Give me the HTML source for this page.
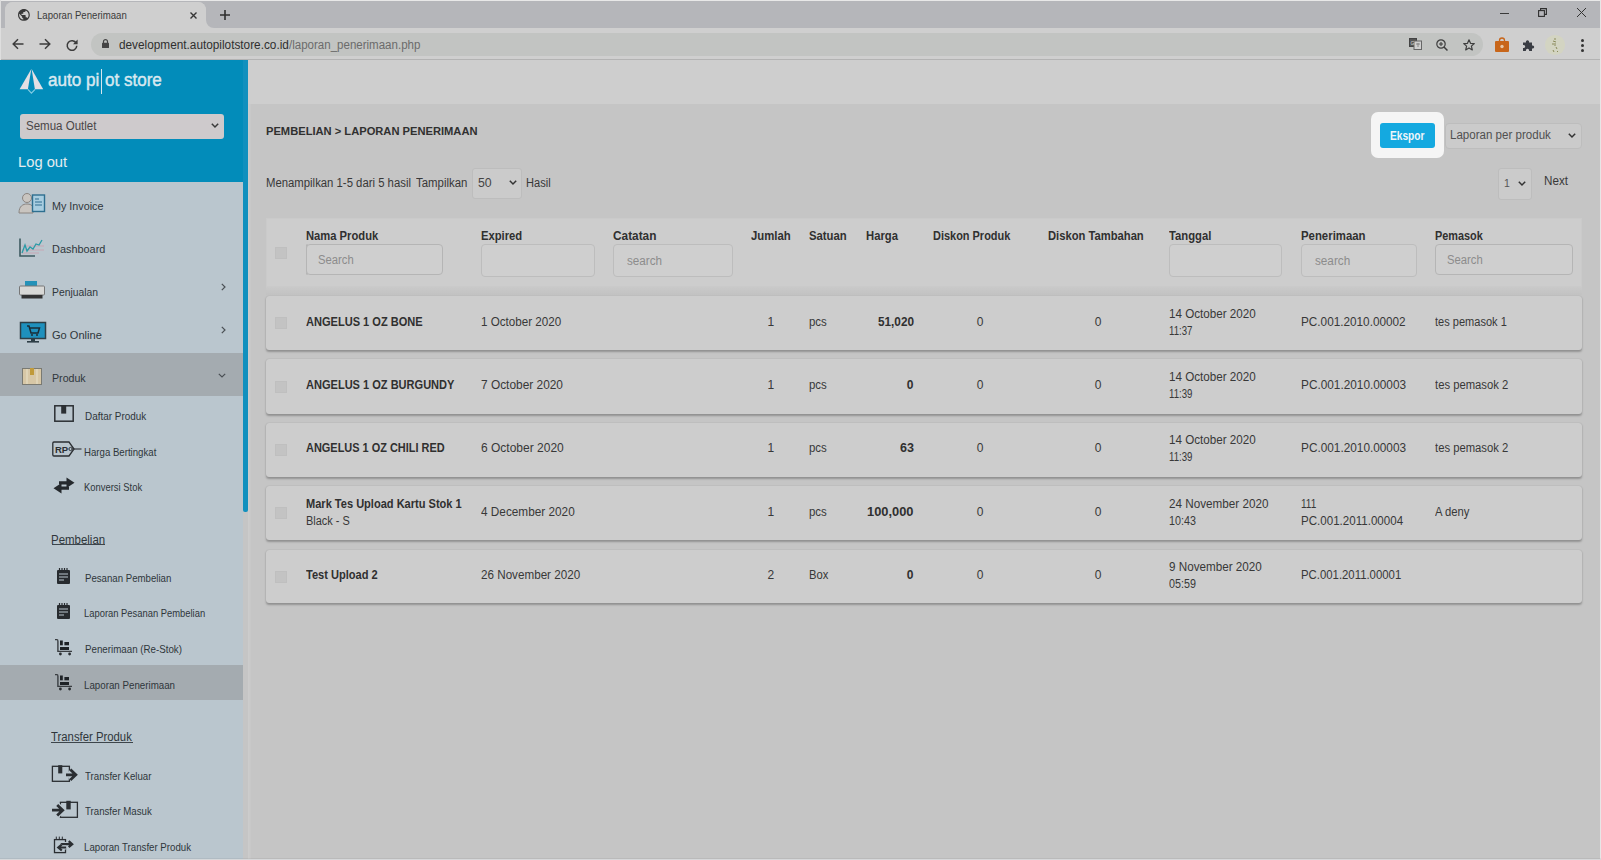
<!DOCTYPE html>
<html><head><meta charset="utf-8">
<style>
*{box-sizing:border-box;margin:0;padding:0}
html,body{width:1601px;height:860px;overflow:hidden;background:#c6c6c6;font-family:"Liberation Sans",sans-serif;color:#2b2b2b}
.a{position:absolute}
.t{position:absolute;white-space:nowrap;transform-origin:0 50%}
svg{position:absolute;overflow:visible}
.card{position:absolute;left:266px;width:1316px;background:#cdcdcd;border-radius:3px;box-shadow:0 1.5px 2px rgba(0,0,0,.25),0 0 1px rgba(0,0,0,.16)}
.inp{position:absolute;top:244px;height:33px;border:1px solid #bdbdbd;border-radius:4px;background:#cfcfcf}
.cb{position:absolute;left:275px;width:12px;height:12px;background:#c3c3c3;border:1px solid #bfbfbf}
</style></head><body>
<!-- window / tab bar -->
<div class="a" style="left:0;top:0;width:1601px;height:28px;background:#b5b6ba"></div>
<div class="a" style="left:0;top:0;width:1601px;height:1px;background:#e8e8e8"></div>
<div class="a" style="left:5px;top:2px;width:201px;height:27px;background:#cfcfcf;border-radius:8px 8px 0 0"></div>
<div class="a" style="left:198px;top:20px;width:16px;height:8px;background:#cfcfcf"></div>
<div class="a" style="left:206px;top:12px;width:16px;height:16px;border-radius:50%;background:#b5b6ba"></div>
<div class="a" style="left:206px;top:1px;width:16px;height:19px;background:#b5b6ba"></div>
<div class="a" style="left:5px;top:2px;width:201px;height:27px;background:#cfcfcf;border-radius:8px 8px 0 0"></div>
<!-- toolbar -->
<div class="a" style="left:0;top:28px;width:1601px;height:32px;background:#cfcfcf"></div>
<div class="a" style="left:0;top:59px;width:1601px;height:1px;background:#b3b3b3"></div>
<div class="a" style="left:91px;top:33px;width:1392px;height:23px;background:#c2c4c2;border-radius:12px"></div>
<div class="a" style="left:1600px;top:0;width:1px;height:860px;background:#e6e6e6"></div>
<div class="a" style="left:0;top:0;width:1px;height:860px;background:#dedede"></div>

<!-- tab icons -->
<svg style="left:17.5px;top:9px" width="11.8" height="11.8" viewBox="2 2 20 20"><path fill="#3a3a3a" d="M12 2C6.48 2 2 6.48 2 12s4.48 10 10 10 10-4.48 10-10S17.52 2 12 2zm-1 17.93c-3.95-.49-7-3.850-7-7.93 0-.62.08-1.21.21-1.79L9 15v1c0 1.1.9 2 2 2v1.93zm6.9-2.54c-.26-.81-1-1.39-1.9-1.39h-1v-3c0-.55-.45-1-1-1H8v-2h2c.55 0 1-.45 1-1V7h2c1.1 0 2-.9 2-2v-.41c2.930 1.19 5 4.06 5 7.41 0 2.08-.8 3.97-2.1 5.39z"/></svg>
<svg style="left:190px;top:11.5px" width="7" height="7" viewBox="0 0 7 7"><path d="M.5 .5L6.5 6.5M6.5 .5L.5 6.5" stroke="#363636" stroke-width="1.4"/></svg>
<svg style="left:220px;top:10px" width="10" height="10" viewBox="0 0 10 10"><path d="M5 0V10M0 5H10" stroke="#2f2f2f" stroke-width="1.6"/></svg>
<!-- window controls -->
<div class="a" style="left:1500px;top:12.5px;width:8.5px;height:1.3px;background:#3a3a3a"></div>
<svg style="left:1538px;top:8px" width="9" height="9" viewBox="0 0 9 9"><rect x=".6" y="2.6" width="5.8" height="5.8" fill="none" stroke="#2e2e2e" stroke-width="1.1"/><path d="M2.6 2.6V.6H8.4V6.4H6.4" fill="none" stroke="#2e2e2e" stroke-width="1.1"/></svg>
<svg style="left:1576.5px;top:8px" width="9" height="9" viewBox="0 0 9 9"><path d="M0 0L9 9M9 0L0 9" stroke="#333" stroke-width="1"/></svg>
<!-- nav icons -->
<svg style="left:12px;top:38px" width="12" height="12" viewBox="0 0 12 12"><path d="M11.5 6H1.5M6 1.2L1.2 6L6 10.8" fill="none" stroke="#3c3c3c" stroke-width="1.5"/></svg>
<svg style="left:39px;top:38px" width="12" height="12" viewBox="0 0 12 12"><path d="M.5 6H10.5M6 1.2L10.8 6L6 10.8" fill="none" stroke="#3c3c3c" stroke-width="1.5"/></svg>
<svg style="left:66px;top:38.5px" width="12" height="12" viewBox="0 0 12 12"><path d="M10.2 4.2A4.8 4.8 0 1 0 10.8 6.8" fill="none" stroke="#3c3c3c" stroke-width="1.5"/><path d="M11.6 .6V5.2H7Z" fill="#3c3c3c"/></svg>
<svg style="left:101.5px;top:39px" width="7" height="9" viewBox="0 0 7 9"><path d="M1.5 4V2.6A2 2 0 0 1 5.5 2.6V4" fill="none" stroke="#444" stroke-width="1.2"/><rect x="0" y="3.8" width="7" height="5.2" rx=".6" fill="#444"/></svg>
<!-- right toolbar icons -->
<svg style="left:1409px;top:38px" width="13" height="12" viewBox="0 0 13 12"><rect x=".5" y=".5" width="7" height="8" fill="#555" stroke="#444"/><rect x="5" y="3" width="7.5" height="8.5" fill="#cfcfcf" stroke="#666"/><text x="1.5" y="6.5" font-size="5" fill="#ddd" font-family="Liberation Sans">G</text><path d="M7 6H11M9 5V9" stroke="#777" stroke-width=".8"/></svg>
<svg style="left:1435.5px;top:38.5px" width="12" height="12" viewBox="0 0 12 12"><circle cx="5" cy="5" r="4.2" fill="none" stroke="#3e3e3e" stroke-width="1.2"/><path d="M8 8L11.5 11.5" stroke="#3e3e3e" stroke-width="1.5"/><path d="M5 3V7M3 5H7" stroke="#3e3e3e" stroke-width="1.1"/></svg>
<svg style="left:1462.5px;top:38.5px" width="12" height="12" viewBox="0 0 12 12"><path d="M6 .8L7.5 4.3L11.3 4.6L8.4 7.1L9.3 10.9L6 8.9L2.7 10.9L3.6 7.1L.7 4.6L4.5 4.3Z" fill="none" stroke="#3e3e3e" stroke-width="1.2" stroke-linejoin="round"/></svg>
<svg style="left:1495px;top:37.5px" width="14" height="14" viewBox="0 0 14 14"><rect x="0" y="3" width="14" height="11" rx="1" fill="#c8661a"/><path d="M4.5 3.5V2.5A2.5 2.5 0 0 1 9.5 2.5V3.5" fill="none" stroke="#c8661a" stroke-width="1.3"/><circle cx="7" cy="8.5" r="1.7" fill="#e8c8a8"/></svg>
<svg style="left:1522px;top:38.5px" width="13" height="12" viewBox="0 0 13 12"><path d="M1 3.5H4A1.6 1.6 0 1 1 7 3.5H10V6.5A1.6 1.6 0 1 1 10 9.5V12H7A1.6 1.6 0 1 0 4 12H1V9A1.6 1.6 0 1 0 1 6Z" fill="#3a3d44"/></svg>
<div class="a" style="left:1545px;top:35px;width:19.5px;height:19.5px;border-radius:50%;background:#d3d4c2"></div>
<svg style="left:1549px;top:37px" width="12" height="16" viewBox="0 0 12 16"><path d="M6 1V3M4 4L7 5M6 6V9M3 7H5M7 10L8 12M4 13L5 15M8 14L9 15" stroke="#8a8a5a" stroke-width="1"/></svg>
<div class="a" style="left:1581px;top:38.5px;width:3px;height:3px;border-radius:50%;background:#333"></div>
<div class="a" style="left:1581px;top:43.5px;width:3px;height:3px;border-radius:50%;background:#333"></div>
<div class="a" style="left:1581px;top:48.5px;width:3px;height:3px;border-radius:50%;background:#333"></div>

<!-- sidebar -->
<div class="a" style="left:0;top:60px;width:248px;height:800px;background:#bac6ce"></div>
<div class="a" style="left:0;top:60px;width:248px;height:122px;background:#028cba"></div>
<div class="a" style="left:243px;top:182px;width:5px;height:678px;background:#c5c5c5"></div>
<div class="a" style="left:243px;top:60px;width:4.5px;height:452px;background:#1190be;border-radius:0 0 2px 2px"></div>
<div class="a" style="left:0;top:353px;width:243px;height:43px;background:#a4abb0"></div>
<div class="a" style="left:0;top:665px;width:243px;height:35px;background:#a4abb0"></div>
<!-- logo -->
<svg style="left:14px;top:64px" width="36" height="36" viewBox="14 64 36 36">
 <path d="M31.3 69L19.6 89.3H27.9Z" fill="#e4e0e4"/>
 <path d="M31.6 69L43.2 89.3H34.9Z" fill="#e4e0e4"/>
 <path d="M27.9 89.3L31.4 93.2L35.1 89.3" fill="none" stroke="#86cde4" stroke-width="1.1"/>
</svg>
<div class="a" style="left:100.5px;top:69px;width:1.6px;height:25px;background:#d6e6ee"></div>

<!-- outlet select -->
<div class="a" style="left:19.5px;top:114px;width:204px;height:25px;background:#cecacc;border-radius:3px"></div>
<svg style="left:210.5px;top:123px" width="8" height="5" viewBox="0 0 8 5"><path d="M.8 .8L4 4L7.2 .8" fill="none" stroke="#3a3a3a" stroke-width="1.5"/></svg>

<!-- sidebar icons -->
<svg style="left:18px;top:192px" width="28" height="22" viewBox="0 0 28 22">
 <circle cx="9" cy="6" r="4.5" fill="#c9c5c0" stroke="#8a8480" stroke-width="1"/>
 <path d="M1 21C1 14 5 12 9 12C12 12 14 13 15 15V21Z" fill="#c9c5c0" stroke="#8a8480" stroke-width="1"/>
 <rect x="14.5" y="3" width="12" height="16.5" fill="#a8cde0" stroke="#2e6f90" stroke-width="1.4"/>
 <path d="M17 7H21M17 10H24M17 13H24" stroke="#2e6f90" stroke-width="1.2"/>
</svg>
<svg style="left:19px;top:238px" width="26" height="19" viewBox="0 0 26 19">
 <path d="M1 .5V18H16" fill="none" stroke="#3d5a60" stroke-width="1.6"/>
 <path d="M3 8H25M3 12H25M3 15H20" stroke="#c7a6b4" stroke-width="1"/>
 <path d="M3 15L6 7L8 13L11 9L14 11L17 6L20 7L23 2" fill="none" stroke="#2a9aa6" stroke-width="1.3"/>
</svg>
<svg style="left:19px;top:281px" width="26" height="18" viewBox="0 0 26 18">
 <rect x="6" y="0" width="12" height="5" fill="#2592b8"/>
 <rect x=".5" y="5" width="25" height="9" rx="1" fill="#d8d8d6" stroke="#777" stroke-width="1"/>
 <rect x="2.5" y="14" width="21" height="3.5" fill="#333"/>
</svg>
<svg style="left:19.5px;top:321.5px" width="26" height="21" viewBox="0 0 26 21">
 <rect x=".5" y=".5" width="25" height="16" fill="#1e90bd" stroke="#2e3e46" stroke-width="1.5"/>
 <path d="M7 4H9L11 11H18L19.5 6H10" fill="none" stroke="#1b2c36" stroke-width="1.5"/>
 <circle cx="12" cy="13" r="1" fill="#1b2c36"/><circle cx="17" cy="13" r="1" fill="#1b2c36"/>
 <rect x="11" y="17" width="4" height="2" fill="#2e3e46"/><rect x="7" y="19" width="12" height="1.6" fill="#2e3e46"/>
</svg>
<svg style="left:221px;top:282.5px" width="5" height="8" viewBox="0 0 5 8"><path d="M.8 .8L4 4L.8 7.2" fill="none" stroke="#4a4f54" stroke-width="1.2"/></svg>
<svg style="left:221px;top:326px" width="5" height="8" viewBox="0 0 5 8"><path d="M.8 .8L4 4L.8 7.2" fill="none" stroke="#4a4f54" stroke-width="1.2"/></svg>
<svg style="left:218px;top:372.5px" width="8" height="5" viewBox="0 0 8 5"><path d="M.8 .8L4 4L7.2 .8" fill="none" stroke="#4a4f54" stroke-width="1.2"/></svg>
<svg style="left:22px;top:368px" width="20" height="17" viewBox="0 0 20 17">
 <rect x=".5" y=".5" width="19" height="16" fill="#d7c7a6" stroke="#7a7a72" stroke-width="1"/>
 <rect x="8" y="0" width="4" height="7" fill="#c09a3a"/>
 <path d="M5 1V16M15 1V16" stroke="#e6dcc4" stroke-width="1.2"/>
</svg>
<svg style="left:54px;top:405px" width="20" height="17" viewBox="0 0 20 17">
 <rect x=".8" y=".8" width="18.4" height="15.4" fill="none" stroke="#2b2f33" stroke-width="1.5"/>
 <rect x="7.2" y="0" width="5" height="8.6" fill="#2b2f33"/>
</svg>
<svg style="left:52px;top:441px" width="30" height="16" viewBox="0 0 30 16">
 <path d="M2 1H17L22 8L17 15H2A1.3 1.3 0 0 1 .8 13.7V2.3A1.3 1.3 0 0 1 2 1Z" fill="none" stroke="#2b2f33" stroke-width="1.3"/>
 <text x="3" y="11.6" font-size="9.5" font-weight="bold" fill="#2b2f33" font-family="Liberation Sans">RP</text>
 <circle cx="18.5" cy="8" r="1.6" fill="none" stroke="#2b2f33" stroke-width="1"/>
 <path d="M20 8H29.5" stroke="#2b2f33" stroke-width="1.1"/>
</svg>
<svg style="left:52.5px;top:477px" width="22" height="17" viewBox="0 0 22 17">
 <path d="M6 4.2H13.5V.5L21.5 5.8L13.5 11V7.6H6Z" fill="#25292d"/>
 <path d="M16 9.4H8.5V6L.5 11.3L8.5 16.5V12.8H16Z" fill="#25292d"/>
</svg>
<!-- calendar/notes icons -->
<svg style="left:57px;top:568px" width="13" height="16" viewBox="0 0 13 16">
 <rect x="0" y="2" width="13" height="14" rx="1" fill="#272b2f"/>
 <path d="M2.5 0V3M5 0V3M7.5 0V3M10 0V3" stroke="#272b2f" stroke-width="1.2"/>
 <path d="M2 6H11M2 9H11M2 12H7" stroke="#b9c5cd" stroke-width="1.2"/>
</svg>
<svg style="left:57px;top:603px" width="13" height="16" viewBox="0 0 13 16">
 <rect x="0" y="2" width="13" height="14" rx="1" fill="#272b2f"/>
 <path d="M2.5 0V3M5 0V3M7.5 0V3M10 0V3" stroke="#272b2f" stroke-width="1.2"/>
 <path d="M2 6H11M2 9H11M2 12H7" stroke="#b9c5cd" stroke-width="1.2"/>
</svg>
<svg style="left:48px;top:632px" width="32" height="30" viewBox="0 0 32 30">
 <path d="M7 7.6H9Q9.9 7.6 9.9 9.2V19.4H24" fill="none" stroke="#3a3e42" stroke-width="1.4"/>
 <rect x="12" y="8.5" width="2.8" height="4.8" fill="#1e2226"/><rect x="16.4" y="10" width="4.6" height="3.3" fill="#1e2226"/><rect x="12" y="15" width="9" height="3" fill="#1e2226"/>
 <circle cx="12.4" cy="22" r="1.4" fill="#2a2e32"/><circle cx="21.6" cy="22" r="1.4" fill="#2a2e32"/>
</svg>
<svg style="left:48px;top:667px" width="32" height="30" viewBox="0 0 32 30">
 <path d="M7 7.6H9Q9.9 7.6 9.9 9.2V19.4H24" fill="none" stroke="#3a3e42" stroke-width="1.4"/>
 <rect x="12" y="8.5" width="2.8" height="4.8" fill="#1e2226"/><rect x="16.4" y="10" width="4.6" height="3.3" fill="#1e2226"/><rect x="12" y="15" width="9" height="3" fill="#1e2226"/>
 <circle cx="12.4" cy="22" r="1.4" fill="#2a2e32"/><circle cx="21.6" cy="22" r="1.4" fill="#2a2e32"/>
</svg>




<svg style="left:46px;top:760px" width="38" height="100" viewBox="46 760 38 100">
 <g fill="none" stroke="#2a2e32">
  <rect x="52.4" y="766.3" width="17" height="15" stroke-width="1.3"/>
  <path d="M65.5 774.8H75.5M70.3 769.6L75.8 774.8L70.3 780" stroke="#bac6ce" stroke-width="5.5"/>
  <path d="M66 774.8H75.5M70.3 769.6L75.8 774.8L70.3 780" stroke-width="2.8"/>
  <rect x="60.4" y="802.3" width="17" height="15" stroke-width="1.3"/>
  <path d="M52 810.2H62M57.2 805L62.7 810.2L57.2 815.4" stroke="#bac6ce" stroke-width="5.5"/>
  <path d="M52 810.2H62M57.2 805L62.7 810.2L57.2 815.4" stroke-width="2.8"/>
  <rect x="54.5" y="839.6" width="11" height="13" stroke-width="1.3"/>
  <path d="M56.3 836.6V840M59.3 836.6V840M62.3 836.6V840" stroke-width="1"/>
  <path d="M60 844.2H72M68.7 841.2L72.2 844.2L68.7 847.2" stroke="#bac6ce" stroke-width="4.5"/>
  <path d="M60 844.2H72M68.7 841.2L72.2 844.2L68.7 847.2" stroke-width="2.2"/>
  <path d="M66 847.5H58.5M61.8 844.5L58.3 847.5L61.8 850.5" stroke="#bac6ce" stroke-width="4"/>
  <path d="M66 847.5H58.5M61.8 844.5L58.3 847.5L61.8 850.5" stroke-width="2.2"/>
 </g>
 <rect x="58.2" y="765.2" width="4.1" height="8.2" fill="#2a2e32"/>
 <rect x="66.3" y="800.8" width="4.4" height="8.6" fill="#2a2e32"/>
</svg>
<!-- main -->
<div class="a" style="left:248px;top:60px;width:1352px;height:44px;background:#cecece"></div>
<div class="a" style="left:248px;top:104px;width:1352px;height:756px;background:#c5c5c5"></div>
<div class="a" style="left:248px;top:104px;width:3px;height:756px;background:linear-gradient(90deg,#cdcdcd,#c7c7c7)"></div>
<div class="a" style="left:0;top:858px;width:1601px;height:1px;background:rgba(0,0,0,.05)"></div>
<div class="a" style="left:0;top:859px;width:1601px;height:1px;background:#d6d8da"></div>
<!-- ekspor highlight -->
<div class="a" style="left:1370.5px;top:112px;width:73.5px;height:45.5px;background:#f5f5f5;border-radius:7px"></div>
<div class="a" style="left:1380px;top:122.5px;width:55px;height:25px;background:#14a9e0;border-radius:3px"></div>
<div class="a" style="left:1444.5px;top:123px;width:137px;height:25.5px;background:#cbcbcb;border:1px solid #bdbdbd;border-radius:4px"></div>
<svg style="left:1568px;top:133px" width="8" height="5" viewBox="0 0 8 5"><path d="M.8 .8L4 4L7.2 .8" fill="none" stroke="#333" stroke-width="1.5"/></svg>
<!-- show select -->
<div class="a" style="left:472px;top:167.5px;width:49.5px;height:31px;background:#cbcbcb;border:1px solid #bdbdbd;border-radius:3px"></div>
<svg style="left:508.5px;top:180px" width="8" height="5" viewBox="0 0 8 5"><path d="M.8 .8L4 4L7.2 .8" fill="none" stroke="#333" stroke-width="1.5"/></svg>
<div class="a" style="left:1497.5px;top:167.5px;width:34px;height:32px;background:#cbcbcb;border:1px solid #bdbdbd;border-radius:3px"></div>
<svg style="left:1518px;top:180.5px" width="8" height="5" viewBox="0 0 8 5"><path d="M.8 .8L4 4L7.2 .8" fill="none" stroke="#333" stroke-width="1.5"/></svg>

<!-- table -->
<div class="card" style="top:218px;height:69px;box-shadow:none;border-radius:0;border:1px solid #cacaca"></div>
<div class="a" style="left:266px;top:287px;width:1316px;height:8px;background:linear-gradient(#c9c9c9,#c2c2c2)"></div>
<div class="cb" style="top:246.5px"></div>
<div class="inp" style="left:306px;height:30.5px;border-color:#b5b5b5"></div>
<div class="inp" style="left:481px;width:114px"></div>
<div class="inp" style="left:613px;width:119.5px"></div>
<div class="inp" style="left:1168.5px;width:113.5px"></div>
<div class="inp" style="left:1301px;width:116px"></div>
<div class="inp" style="left:1435px;width:137.5px;height:30.5px;border-color:#b5b5b5"></div>
<div class="inp" style="left:306px;width:137px;height:30.5px;border-color:#b5b5b5"></div>

<div class="card" style="top:296px;height:54px"></div>
<div class="card" style="top:359px;height:54.5px"></div>
<div class="card" style="top:422.5px;height:54px"></div>
<div class="card" style="top:486px;height:54px"></div>
<div class="card" style="top:549.5px;height:53px"></div>
<div class="cb" style="top:317px"></div>
<div class="cb" style="top:380.5px"></div>
<div class="cb" style="top:443.5px"></div>
<div class="cb" style="top:507px"></div>
<div class="cb" style="top:570.5px"></div>

<div class="a" style="left:51.5px;top:544px;width:53.5px;height:1px;background:#3d454b"></div>
<div class="a" style="left:51.3px;top:742px;width:81.7px;height:1px;background:#3d454b"></div>
<span class="t" style="left:37.10px;top:9.69px;font-size:11px;line-height:11px;color:#3b3b3b;transform:scaleX(0.8741);">Laporan Penerimaan</span>
<span class="t" style="left:118.70px;top:38.72px;font-size:12.5px;line-height:12.5px;color:#2f2f2f;transform:scaleX(0.9438);">development.autopilotstore.co.id</span>
<span class="t" style="left:288.80px;top:38.72px;font-size:12.5px;line-height:12.5px;color:#6b6b6b;transform:scaleX(0.9220);">/laporan_penerimaan.php</span>
<span class="t" style="left:47.70px;top:70.86px;font-size:18px;line-height:18px;color:#d8e8f0;transform:scaleX(0.9501);-webkit-text-stroke:0.45px #d8e8f0">auto pi</span>
<span class="t" style="left:105.00px;top:70.86px;font-size:18px;line-height:18px;color:#d8e8f0;transform:scaleX(0.9464);-webkit-text-stroke:0.45px #d8e8f0">ot store</span>
<span class="t" style="left:26.20px;top:120.44px;font-size:12px;line-height:12px;color:#4a4648;transform:scaleX(0.9603);">Semua Outlet</span>
<span class="t" style="left:18.38px;top:154.53px;font-size:14.5px;line-height:14.5px;color:#e4ecf0;transform:scaleX(1.0158);">Log out</span>
<span class="t" style="left:51.90px;top:200.57px;font-size:11.5px;line-height:11.5px;color:#2f363b;transform:scaleX(0.9365);">My Invoice</span>
<span class="t" style="left:51.90px;top:243.77px;font-size:11.5px;line-height:11.5px;color:#2f363b;transform:scaleX(0.9487);">Dashboard</span>
<span class="t" style="left:52.00px;top:286.87px;font-size:11.5px;line-height:11.5px;color:#2f363b;transform:scaleX(0.9003);">Penjualan</span>
<span class="t" style="left:52.00px;top:330.07px;font-size:11.5px;line-height:11.5px;color:#2f363b;transform:scaleX(0.9614);">Go Online</span>
<span class="t" style="left:52.00px;top:373.47px;font-size:11.5px;line-height:11.5px;color:#2f363b;transform:scaleX(0.9240);">Produk</span>
<span class="t" style="left:84.50px;top:410.87px;font-size:11.5px;line-height:11.5px;color:#2f363b;transform:scaleX(0.8624);">Daftar Produk</span>
<span class="t" style="left:84.00px;top:446.87px;font-size:11.5px;line-height:11.5px;color:#2f363b;transform:scaleX(0.8381);">Harga Bertingkat</span>
<span class="t" style="left:83.70px;top:482.37px;font-size:11.5px;line-height:11.5px;color:#2f363b;transform:scaleX(0.8188);">Konversi Stok</span>
<span class="t" style="left:84.50px;top:573.17px;font-size:11.5px;line-height:11.5px;color:#2f363b;transform:scaleX(0.8387);">Pesanan Pembelian</span>
<span class="t" style="left:84.00px;top:608.47px;font-size:11.5px;line-height:11.5px;color:#2f363b;transform:scaleX(0.8166);">Laporan Pesanan Pembelian</span>
<span class="t" style="left:84.50px;top:643.67px;font-size:11.5px;line-height:11.5px;color:#2f363b;transform:scaleX(0.8475);">Penerimaan (Re-Stok)</span>
<span class="t" style="left:84.00px;top:679.57px;font-size:11.5px;line-height:11.5px;color:#2f363b;transform:scaleX(0.8476);">Laporan Penerimaan</span>
<span class="t" style="left:85.00px;top:770.87px;font-size:11.5px;line-height:11.5px;color:#2f363b;transform:scaleX(0.8431);">Transfer Keluar</span>
<span class="t" style="left:85.00px;top:806.37px;font-size:11.5px;line-height:11.5px;color:#2f363b;transform:scaleX(0.8406);">Transfer Masuk</span>
<span class="t" style="left:84.00px;top:841.87px;font-size:11.5px;line-height:11.5px;color:#2f363b;transform:scaleX(0.8412);">Laporan Transfer Produk</span>
<span class="t" style="left:50.58px;top:533.62px;font-size:12.5px;line-height:12.5px;color:#2f363b;transform:scaleX(0.9172);">Pembelian</span>
<span class="t" style="left:51.30px;top:731.42px;font-size:12.5px;line-height:12.5px;color:#2f363b;transform:scaleX(0.9065);">Transfer Produk</span>
<span class="t" style="left:266.20px;top:125.77px;font-size:11.5px;line-height:11.5px;color:#303030;font-weight:bold;transform:scaleX(0.9693);">PEMBELIAN &gt; LAPORAN PENERIMAAN</span>
<span class="t" style="left:266.20px;top:177.24px;font-size:12px;line-height:12px;color:#383838;transform:scaleX(0.9447);">Menampilkan 1-5 dari 5 hasil</span>
<span class="t" style="left:416.00px;top:177.24px;font-size:12px;line-height:12px;color:#383838;transform:scaleX(0.9503);">Tampilkan</span>
<span class="t" style="left:478.30px;top:177.24px;font-size:12px;line-height:12px;color:#444;transform:scaleX(1.0239);">50</span>
<span class="t" style="left:526.40px;top:177.24px;font-size:12px;line-height:12px;color:#383838;transform:scaleX(0.9229);">Hasil</span>
<span class="t" style="left:1390.00px;top:129.84px;font-size:12px;line-height:12px;color:#eef6fa;font-weight:bold;transform:scaleX(0.8461);">Ekspor</span>
<span class="t" style="left:1450.48px;top:129.42px;font-size:12.5px;line-height:12.5px;color:#505050;transform:scaleX(0.9242);">Laporan per produk</span>
<span class="t" style="left:1504.00px;top:177.81px;font-size:10.5px;line-height:10.5px;color:#555;">1</span>
<span class="t" style="left:1543.77px;top:175.42px;font-size:12.5px;line-height:12.5px;color:#383838;transform:scaleX(0.9315);">Next</span>
<span class="t" style="left:305.80px;top:229.84px;font-size:12px;line-height:12px;color:#303030;font-weight:bold;transform:scaleX(0.9333);">Nama Produk</span>
<span class="t" style="left:480.90px;top:229.84px;font-size:12px;line-height:12px;color:#303030;font-weight:bold;transform:scaleX(0.9362);">Expired</span>
<span class="t" style="left:613.30px;top:229.84px;font-size:12px;line-height:12px;color:#303030;font-weight:bold;transform:scaleX(0.9867);">Catatan</span>
<span class="t" style="left:751.00px;top:229.84px;font-size:12px;line-height:12px;color:#303030;font-weight:bold;transform:scaleX(0.9453);">Jumlah</span>
<span class="t" style="left:809.20px;top:229.84px;font-size:12px;line-height:12px;color:#303030;font-weight:bold;transform:scaleX(0.9426);">Satuan</span>
<span class="t" style="left:866.00px;top:229.84px;font-size:12px;line-height:12px;color:#303030;font-weight:bold;transform:scaleX(0.9377);">Harga</span>
<span class="t" style="left:932.60px;top:229.84px;font-size:12px;line-height:12px;color:#303030;font-weight:bold;transform:scaleX(0.9129);">Diskon Produk</span>
<span class="t" style="left:1047.70px;top:229.84px;font-size:12px;line-height:12px;color:#303030;font-weight:bold;transform:scaleX(0.9341);">Diskon Tambahan</span>
<span class="t" style="left:1168.80px;top:229.84px;font-size:12px;line-height:12px;color:#303030;font-weight:bold;transform:scaleX(0.9380);">Tanggal</span>
<span class="t" style="left:1301.00px;top:229.84px;font-size:12px;line-height:12px;color:#303030;font-weight:bold;transform:scaleX(0.9483);">Penerimaan</span>
<span class="t" style="left:1435.40px;top:229.84px;font-size:12px;line-height:12px;color:#303030;font-weight:bold;transform:scaleX(0.9071);">Pemasok</span>
<span class="t" style="left:317.90px;top:254.04px;font-size:12px;line-height:12px;color:#8c8c8c;transform:scaleX(0.9371);">Search</span>
<span class="t" style="left:627.00px;top:254.74px;font-size:12px;line-height:12px;color:#8c8c8c;transform:scaleX(0.9733);">search</span>
<span class="t" style="left:1314.70px;top:254.54px;font-size:12px;line-height:12px;color:#8c8c8c;transform:scaleX(0.9761);">search</span>
<span class="t" style="left:1447.00px;top:253.54px;font-size:12px;line-height:12px;color:#8c8c8c;transform:scaleX(0.9371);">Search</span>
<span class="t" style="left:306.00px;top:316.34px;font-size:12px;line-height:12px;color:#303030;font-weight:bold;transform:scaleX(0.9205);">ANGELUS 1 OZ BONE</span>
<span class="t" style="left:481.00px;top:316.34px;font-size:12px;line-height:12px;color:#383838;transform:scaleX(0.9693);">1 October 2020</span>
<span class="t" style="left:767.50px;top:316.34px;font-size:12px;line-height:12px;color:#383838;">1</span>
<span class="t" style="left:809.20px;top:316.34px;font-size:12px;line-height:12px;color:#383838;transform:scaleX(0.9532);">pcs</span>
<span class="t" style="left:877.50px;top:316.34px;font-size:12px;line-height:12px;color:#303030;font-weight:bold;transform:scaleX(0.9803);">51,020</span>
<span class="t" style="left:976.80px;top:316.34px;font-size:12px;line-height:12px;color:#383838;">0</span>
<span class="t" style="left:1094.80px;top:316.34px;font-size:12px;line-height:12px;color:#383838;">0</span>
<span class="t" style="left:1168.80px;top:308.04px;font-size:12px;line-height:12px;color:#383838;transform:scaleX(0.9708);">14 October 2020</span>
<span class="t" style="left:1168.80px;top:325.34px;font-size:12px;line-height:12px;color:#383838;transform:scaleX(0.8043);">11:37</span>
<span class="t" style="left:1301.00px;top:316.34px;font-size:12px;line-height:12px;color:#383838;transform:scaleX(0.9796);">PC.001.2010.00002</span>
<span class="t" style="left:1435.40px;top:316.34px;font-size:12px;line-height:12px;color:#383838;transform:scaleX(0.9200);">tes pemasok 1</span>
<span class="t" style="left:306.00px;top:379.34px;font-size:12px;line-height:12px;color:#303030;font-weight:bold;transform:scaleX(0.9198);">ANGELUS 1 OZ BURGUNDY</span>
<span class="t" style="left:481.00px;top:379.34px;font-size:12px;line-height:12px;color:#383838;transform:scaleX(0.9910);">7 October 2020</span>
<span class="t" style="left:767.50px;top:379.34px;font-size:12px;line-height:12px;color:#383838;">1</span>
<span class="t" style="left:809.20px;top:379.34px;font-size:12px;line-height:12px;color:#383838;transform:scaleX(0.9532);">pcs</span>
<span class="t" style="left:906.80px;top:379.34px;font-size:12px;line-height:12px;color:#303030;font-weight:bold;">0</span>
<span class="t" style="left:976.80px;top:379.34px;font-size:12px;line-height:12px;color:#383838;">0</span>
<span class="t" style="left:1094.80px;top:379.34px;font-size:12px;line-height:12px;color:#383838;">0</span>
<span class="t" style="left:1168.80px;top:371.04px;font-size:12px;line-height:12px;color:#383838;transform:scaleX(0.9708);">14 October 2020</span>
<span class="t" style="left:1168.80px;top:388.34px;font-size:12px;line-height:12px;color:#383838;transform:scaleX(0.8043);">11:39</span>
<span class="t" style="left:1301.00px;top:379.34px;font-size:12px;line-height:12px;color:#383838;transform:scaleX(0.9843);">PC.001.2010.00003</span>
<span class="t" style="left:1435.40px;top:379.34px;font-size:12px;line-height:12px;color:#383838;transform:scaleX(0.9392);">tes pemasok 2</span>
<span class="t" style="left:306.00px;top:442.34px;font-size:12px;line-height:12px;color:#303030;font-weight:bold;transform:scaleX(0.9124);">ANGELUS 1 OZ CHILI RED</span>
<span class="t" style="left:481.00px;top:442.34px;font-size:12px;line-height:12px;color:#383838;">6 October 2020</span>
<span class="t" style="left:767.50px;top:442.34px;font-size:12px;line-height:12px;color:#383838;">1</span>
<span class="t" style="left:809.20px;top:442.34px;font-size:12px;line-height:12px;color:#383838;transform:scaleX(0.9532);">pcs</span>
<span class="t" style="left:899.50px;top:442.34px;font-size:12px;line-height:12px;color:#303030;font-weight:bold;transform:scaleX(1.0458);">63</span>
<span class="t" style="left:976.80px;top:442.34px;font-size:12px;line-height:12px;color:#383838;">0</span>
<span class="t" style="left:1094.80px;top:442.34px;font-size:12px;line-height:12px;color:#383838;">0</span>
<span class="t" style="left:1168.80px;top:434.04px;font-size:12px;line-height:12px;color:#383838;transform:scaleX(0.9708);">14 October 2020</span>
<span class="t" style="left:1168.80px;top:451.34px;font-size:12px;line-height:12px;color:#383838;transform:scaleX(0.8043);">11:39</span>
<span class="t" style="left:1301.00px;top:442.34px;font-size:12px;line-height:12px;color:#383838;transform:scaleX(0.9843);">PC.001.2010.00003</span>
<span class="t" style="left:1435.40px;top:442.34px;font-size:12px;line-height:12px;color:#383838;transform:scaleX(0.9392);">tes pemasok 2</span>
<span class="t" style="left:306.00px;top:498.04px;font-size:12px;line-height:12px;color:#303030;font-weight:bold;transform:scaleX(0.9205);">Mark Tes Upload Kartu Stok 1</span>
<span class="t" style="left:306.00px;top:515.34px;font-size:12px;line-height:12px;color:#383838;transform:scaleX(0.9124);">Black - S</span>
<span class="t" style="left:481.00px;top:506.34px;font-size:12px;line-height:12px;color:#383838;transform:scaleX(0.9821);">4 December 2020</span>
<span class="t" style="left:767.50px;top:506.34px;font-size:12px;line-height:12px;color:#383838;">1</span>
<span class="t" style="left:809.20px;top:506.34px;font-size:12px;line-height:12px;color:#383838;transform:scaleX(0.9532);">pcs</span>
<span class="t" style="left:867.00px;top:506.34px;font-size:12px;line-height:12px;color:#303030;font-weight:bold;transform:scaleX(1.0709);">100,000</span>
<span class="t" style="left:976.80px;top:506.34px;font-size:12px;line-height:12px;color:#383838;">0</span>
<span class="t" style="left:1094.80px;top:506.34px;font-size:12px;line-height:12px;color:#383838;">0</span>
<span class="t" style="left:1168.80px;top:498.04px;font-size:12px;line-height:12px;color:#383838;transform:scaleX(0.9737);">24 November 2020</span>
<span class="t" style="left:1168.80px;top:515.34px;font-size:12px;line-height:12px;color:#383838;transform:scaleX(0.8960);">10:43</span>
<span class="t" style="left:1301.00px;top:498.04px;font-size:12px;line-height:12px;color:#383838;transform:scaleX(0.8348);">111</span>
<span class="t" style="left:1301.00px;top:515.34px;font-size:12px;line-height:12px;color:#383838;transform:scaleX(0.9643);">PC.001.2011.00004</span>
<span class="t" style="left:1435.40px;top:506.34px;font-size:12px;line-height:12px;color:#383838;transform:scaleX(0.9395);">A deny</span>
<span class="t" style="left:306.00px;top:569.34px;font-size:12px;line-height:12px;color:#303030;font-weight:bold;transform:scaleX(0.9217);">Test Upload 2</span>
<span class="t" style="left:481.00px;top:569.34px;font-size:12px;line-height:12px;color:#383838;transform:scaleX(0.9718);">26 November 2020</span>
<span class="t" style="left:767.50px;top:569.34px;font-size:12px;line-height:12px;color:#383838;">2</span>
<span class="t" style="left:809.20px;top:569.34px;font-size:12px;line-height:12px;color:#383838;transform:scaleX(0.9334);">Box</span>
<span class="t" style="left:906.80px;top:569.34px;font-size:12px;line-height:12px;color:#303030;font-weight:bold;">0</span>
<span class="t" style="left:976.80px;top:569.34px;font-size:12px;line-height:12px;color:#383838;">0</span>
<span class="t" style="left:1094.80px;top:569.34px;font-size:12px;line-height:12px;color:#383838;">0</span>
<span class="t" style="left:1168.80px;top:561.04px;font-size:12px;line-height:12px;color:#383838;transform:scaleX(0.9727);">9 November 2020</span>
<span class="t" style="left:1168.80px;top:578.34px;font-size:12px;line-height:12px;color:#383838;transform:scaleX(0.8960);">05:59</span>
<span class="t" style="left:1301.00px;top:569.34px;font-size:12px;line-height:12px;color:#383838;transform:scaleX(0.9464);">PC.001.2011.00001</span>
</body></html>
